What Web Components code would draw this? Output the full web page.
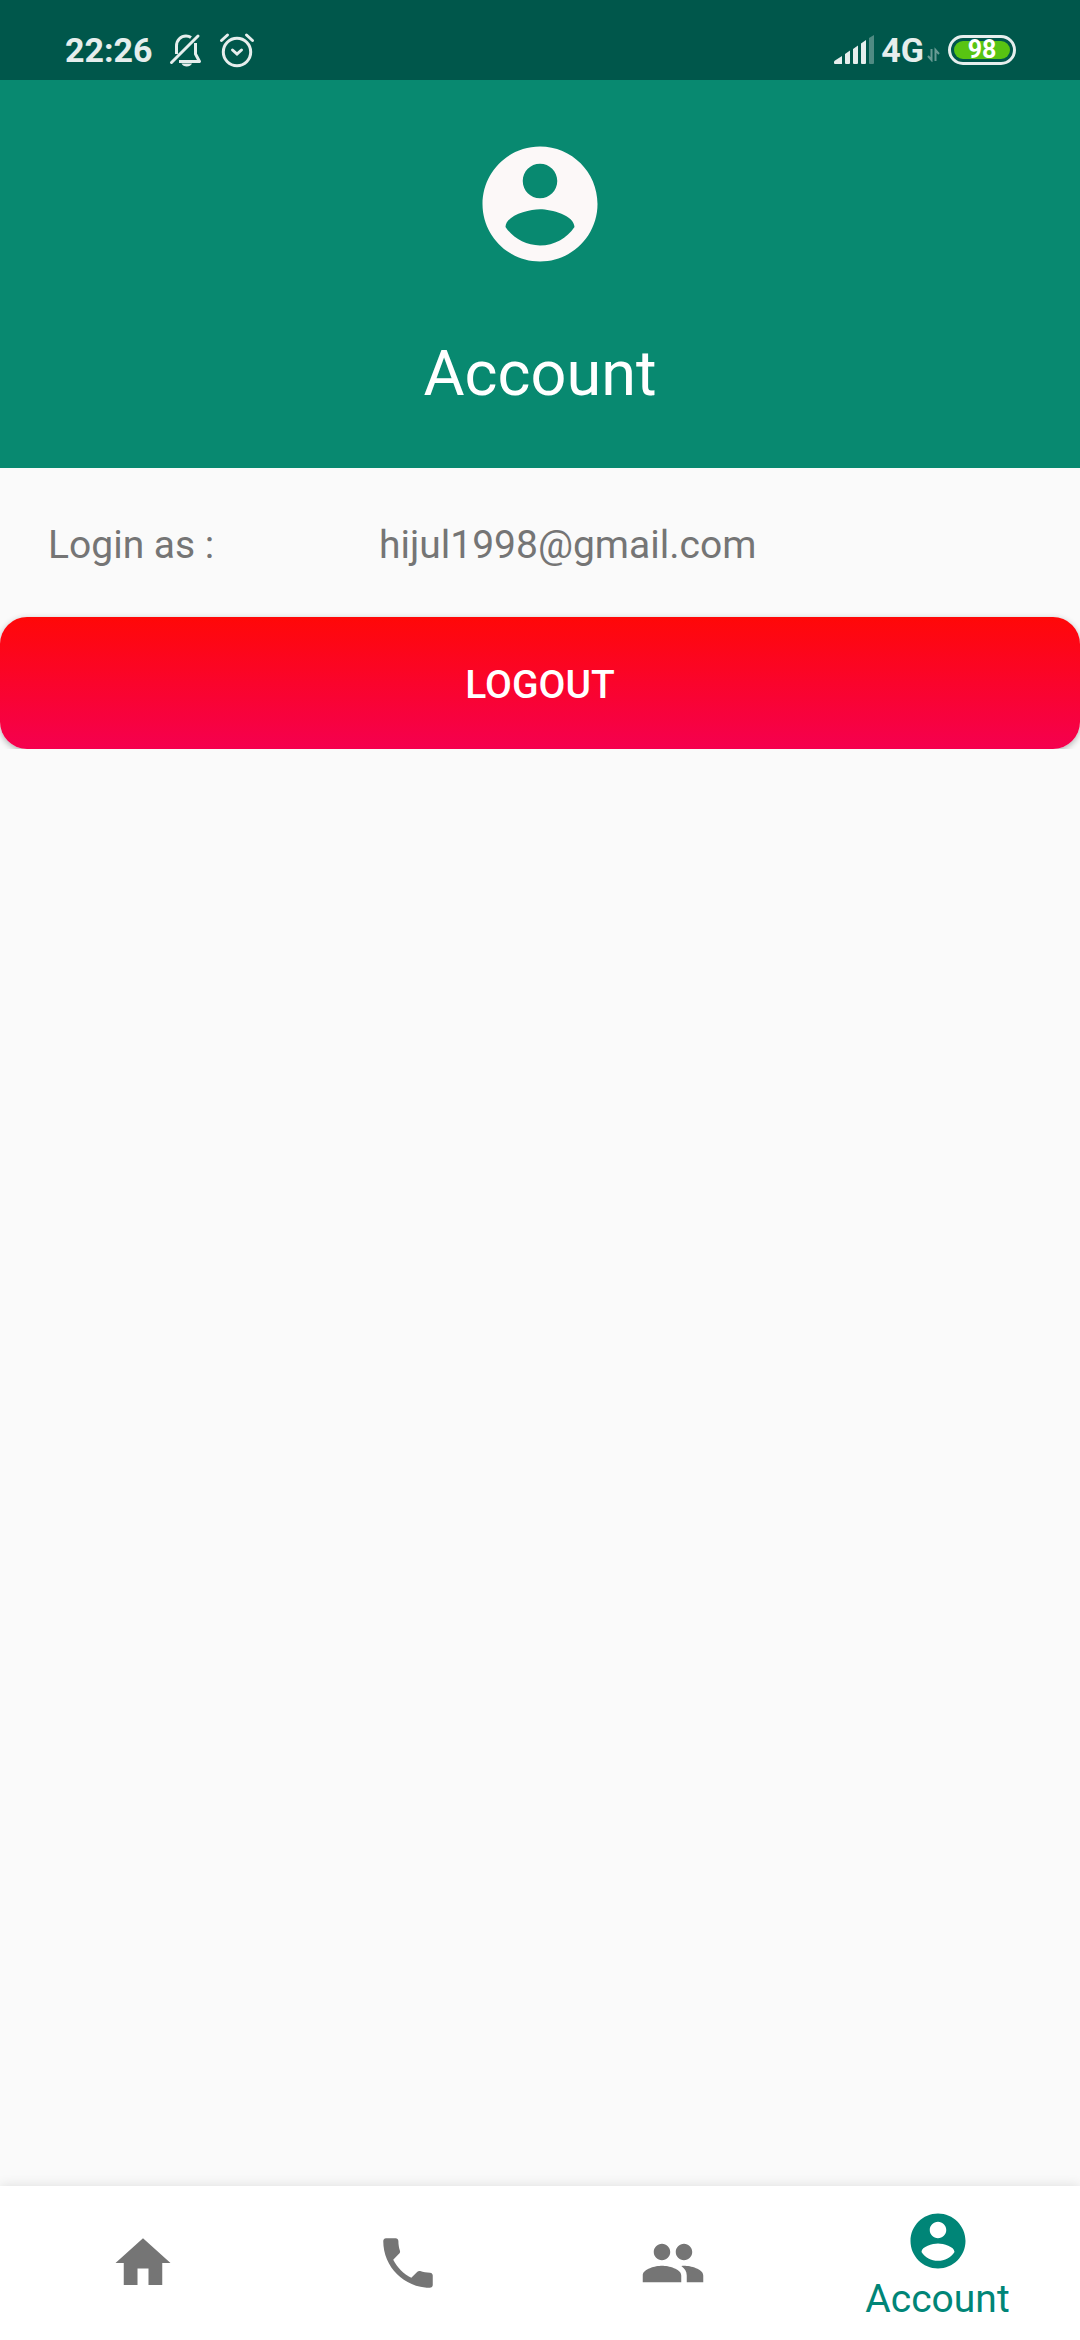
<!DOCTYPE html>
<html lang="en">
<head>
<meta charset="utf-8">
<meta name="viewport" content="width=device-width, initial-scale=1">
<title>Account</title>
<style>
html, body { margin: 0; }
body { background: #fafafa; font-family: Roboto, "Noto Sans", sans-serif; font-size: 39px; line-height: 46px; color: #757575; }
</style>
</head>
<body>
<account-page></account-page>

<template id="page-tpl">
  <style>
    :host { display: flex; flex-direction: column; min-height: 100vh; }
    main { flex: 1; }
  </style>
  <status-bar></status-bar>
  <main>
    <account-header>Account</account-header>
    <login-info email="hijul1998@gmail.com">Login as :</login-info>
    <logout-button>LOGOUT</logout-button>
  </main>
  <bottom-nav>
    <nav-item icon="home" label="Home"></nav-item>
    <nav-item icon="call" label="Call"></nav-item>
    <nav-item icon="people" label="People"></nav-item>
    <nav-item icon="account" label="Account" active>Account</nav-item>
  </bottom-nav>
</template>

<template id="status-tpl">
  <style>
    :host { display: flex; justify-content: space-between; align-items: center; box-sizing: border-box; height: 80px; padding: 19px 64px 0 65px; background: #00574b; color: #e6eeed; font-size: 34px; line-height: 40px; font-weight: 700; }
    div { display: flex; align-items: center; }
    .left { gap: 16px; }
    .right { gap: 8px; }
    svg { display: block; fill: none; stroke: #e6eeed; }
    .solid { fill: #e6eeed; stroke: none; }
    .signal { gap: 6px; }
    .data { gap: 3px; }
    .battery { box-sizing: border-box; width: 68px; height: 30px; border: 3px solid #e6eeed; border-radius: 15px; padding: 3px; }
    .charge { flex: 1; height: 18px; border-radius: 9px; background: #58c412; color: #fff; justify-content: center; font-size: 25px; line-height: 18px; }
  </style>
  <div class="left">
    <span>22:26</span>
    <svg width="34" height="36" viewBox="0 0 34 36" stroke-width="3">
      <path d="M7.500 22V14C7.500 8 12 4 17 4C19 4 20.600 4.500 22 5.500M26.500 11V22L30.500 29.500H10" stroke-linejoin="round"/>
      <path d="M2.500 30.500L29 4" stroke-linecap="round"/>
      <path d="M12.500 31.500H23C21.500 35.500 14 35.500 12.500 31.500Z" fill="#e6eeed" stroke="none"/>
    </svg>
    <svg width="36" height="36" viewBox="0 0 36 36" stroke-width="3" stroke-linecap="round">
      <circle cx="18" cy="20" r="13.700"/>
      <path d="M13.500 18L18 22L22.500 18M2.500 8.500L8.500 3M33.500 8.500L27.500 3"/>
    </svg>
  </div>
  <div class="right">
    <div class="signal">
      <svg class="solid" width="41" height="30" viewBox="0 0 41 30">
        <path d="M0 27Q0 26 1 25.500L8 21V29H1Q0 29 0 28ZM11 19L16 15.500V28Q16 29 15 29H12Q11 29 11 28ZM19 14L24 10.500V28Q24 29 23 29H20Q19 29 19 28ZM27 8.500L32 5V28Q32 29 31 29H28Q27 29 27 28Z"/>
        <path d="M35 3L40 0V28Q40 29 39 29H36Q35 29 35 28Z" opacity=".35"/>
      </svg>
      <div class="data">
        <span>4G</span>
        <svg width="13" height="24" viewBox="0 0 13 24" stroke-width="2" opacity=".45"><path d="M4.500 11V22L1 18M8.500 23V12L12 16"/></svg>
      </div>
    </div>
    <div class="battery"><div class="charge">98</div></div>
  </div>
</template>

<template id="header-tpl">
  <style>
    :host { display: flex; flex-direction: column; align-items: center; gap: 64px; padding: 55px 0 57px; background: #088970; color: #fff; }
    md-icon { --icon-size: 138px; color: #fcf8f8; }
    h1 { margin: 0; font-size: 63px; line-height: 74px; font-weight: 400; }
  </style>
  <md-icon name="account"></md-icon>
  <h1><slot></slot></h1>
</template>

<template id="login-tpl">
  <style>
    :host { display: block; padding: 54px 48px 49px; }
    dl { display: flex; margin: 0; }
    dt { flex: 0 0 331px; }
    dd { margin: 0; flex: 1; }
  </style>
  <dl><dt><slot></slot></dt><dd></dd></dl>
</template>

<template id="logout-tpl">
  <style>
    :host { display: block; clip-path: inset(-12px 0 0 0); }
    button { display: block; width: 100%; border: 0; border-radius: 27px; padding: 45px 16px 41px; background: linear-gradient(#ff0808, #f5004f); color: #fff; font: inherit; font-weight: 500; box-shadow: 0 2px 6px rgba(0, 0, 0, .3); }
  </style>
  <button type="button"><slot></slot></button>
</template>

<template id="nav-tpl">
  <style>
    :host { display: block; background: #fff; box-shadow: 0 0 12px rgba(0, 0, 0, .12); }
    nav { display: flex; height: 154px; padding: 0 10px; }
  </style>
  <nav><slot></slot></nav>
</template>

<template id="item-tpl">
  <style>
    :host { flex: 1; display: flex; color: #757575; }
    :host([active]) { color: #008577; }
    a { flex: 1; display: flex; flex-direction: column; align-items: center; justify-content: center; gap: 4px; color: inherit; text-decoration: none; line-height: 40px; }
    :host([active]) a { gap: 5px; }
  </style>
  <a href="#"><md-icon></md-icon><span><slot></slot></span></a>
</template>

<script>
const tpl = id => document.getElementById(id).content.cloneNode(true);
const ICONS = {
  home: "M10 20v-6h4v6h5v-8h3L12 3 2 12h3v8z",
  call: "M6.620 10.790c1.440 2.830 3.760 5.140 6.590 6.590l2.200-2.200c.270-.270.670-.360 1.020-.240 1.120.370 2.330.570 3.570.570.550 0 1 .450 1 1V20c0 .550-.450 1-1 1-9.390 0-17-7.610-17-17 0-.550.450-1 1-1h3.500c.550 0 1 .450 1 1 0 1.250.200 2.450.570 3.570.110.350.030.740-.250 1.020l-2.200 2.200z",
  people: "M16 11c1.660 0 2.990-1.340 2.990-3S17.660 5 16 5s-3 1.340-3 3 1.340 3 3 3zm-8 0c1.660 0 2.990-1.340 2.990-3S9.660 5 8 5 5 6.340 5 8s1.340 3 3 3zm0 2c-2.330 0-7 1.170-7 3.500V19h14v-2.500c0-2.330-4.670-3.500-7-3.500zm8 0c-.290 0-.620.020-.970.050 1.160.840 1.970 1.970 1.970 3.450V19h6v-2.500c0-2.330-4.670-3.500-7-3.500z",
  account: "M12 2C6.480 2 2 6.480 2 12s4.480 10 10 10 10-4.480 10-10S17.520 2 12 2zm0 3c1.660 0 3 1.340 3 3s-1.340 3-3 3-3-1.340-3-3 1.340-3 3-3zm0 14.200c-2.500 0-4.710-1.280-6-3.220.030-1.990 4-3.080 6-3.080 1.990 0 5.970 1.090 6 3.080-1.290 1.940-3.500 3.220-6 3.220z"
};

class TemplateElement extends HTMLElement {
  constructor() {
    super();
    this.attachShadow({ mode: "open" }).append(tpl(this.constructor.template));
  }
}

class MdIcon extends HTMLElement {
  static observedAttributes = ["name"];
  constructor() {
    super();
    this.attachShadow({ mode: "open" }).innerHTML = `
      <style>
        :host { display: block; width: var(--icon-size, 66px); height: var(--icon-size, 66px); }
        svg { display: block; width: 100%; height: 100%; fill: currentColor; }
      </style>
      <svg viewBox="0 0 24 24" aria-hidden="true"><path/></svg>`;
  }
  attributeChangedCallback(attr, old, value) {
    this.shadowRoot.querySelector("path").setAttribute("d", ICONS[value] || "");
  }
}
class StatusBar extends TemplateElement { static template = "status-tpl"; }
class AccountHeader extends TemplateElement { static template = "header-tpl"; }
class LoginInfo extends TemplateElement {
  static template = "login-tpl";
  connectedCallback() { this.shadowRoot.querySelector("dd").textContent = this.getAttribute("email"); }
}
class LogoutButton extends TemplateElement { static template = "logout-tpl"; }
class BottomNav extends TemplateElement { static template = "nav-tpl"; }
class NavItem extends TemplateElement {
  static template = "item-tpl";
  connectedCallback() {
    const link = this.shadowRoot.querySelector("a");
    link.setAttribute("aria-label", this.getAttribute("label"));
    if (this.hasAttribute("active")) link.setAttribute("aria-current", "page");
    else this.shadowRoot.querySelector("span").remove();
    this.shadowRoot.querySelector("md-icon").setAttribute("name", this.getAttribute("icon"));
  }
}
class AccountPage extends TemplateElement { static template = "page-tpl"; }

customElements.define("md-icon", MdIcon);
customElements.define("status-bar", StatusBar);
customElements.define("account-header", AccountHeader);
customElements.define("login-info", LoginInfo);
customElements.define("logout-button", LogoutButton);
customElements.define("nav-item", NavItem);
customElements.define("bottom-nav", BottomNav);
customElements.define("account-page", AccountPage);
</script>
</body>
</html>
